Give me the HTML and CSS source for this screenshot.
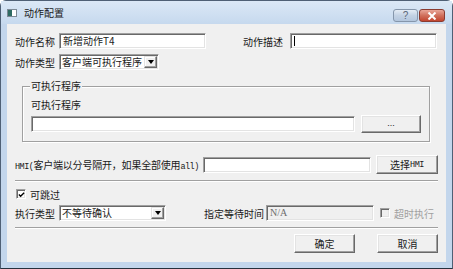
FILE: index.html
```html
<!DOCTYPE html>
<html lang="zh-CN">
<head>
    <meta charset="UTF-8">
    <meta name="viewport" content="width=device-width, initial-scale=1.0">
    <title>动作配置</title>
    <link rel="stylesheet" href="styles.css">
</head>
<body>

    <div class="window">
        <div class="titlebar">
            <span class="app-icon"><span class="app-icon-pane"></span></span>
            <span class="title">动作配置</span>
            <span class="caption-btns">
                <span class="cap-btn help">?</span>
                <span class="cap-btn close">
                    <svg width="10" height="8" viewBox="0 0 10 8"><path d="M1.5 0.5 L8.5 7.5 M8.5 0.5 L1.5 7.5" stroke="#fff" stroke-width="2"/></svg>
                </span>
            </span>
        </div>

        <div class="client">
            <div class="row row-name">
                <span class="lbl">动作名称</span>
                <div class="edit w-name">新增动作T4</div>
                <span class="fill"></span>
                <span class="lbl-desc">动作描述</span>
                <div class="edit w-name desc"><span class="caret"></span></div>
            </div>

            <div class="row row-type">
                <span class="lbl">动作类型</span>
                <div class="edit combo w-type">
                    <span class="combo-text">客户端可执行程序</span>
                    <span class="combo-arrow"><span class="tri"></span></span>
                </div>
            </div>

            <div class="group">
                <span class="legend">可执行程序</span>
                <div class="group-lbl">可执行程序</div>
                <div class="row row-exe">
                    <div class="edit w-exe"></div>
                    <div class="btn btn-browse">...</div>
                </div>
            </div>

            <div class="row row-hmi">
                <span class="lbl-hmi"><span class="latin">HMI(</span>客户端以分号隔开，如果全部使用<span class="latin">all)</span></span>
                <div class="edit w-hmi"></div>
                <div class="btn btn-hmi">选择<span class="latin">HMI</span></div>
            </div>

            <div class="sep sep-1"></div>

            <div class="row row-skip">
                <span class="check">
                    <svg width="8" height="8" viewBox="0 0 8 8"><path d="M1 3.5 L3 5.5 L7 1.5" stroke="#000" stroke-width="1.6" fill="none"/></svg>
                </span>
                <span>可跳过</span>
            </div>

            <div class="row row-exec">
                <span class="lbl">执行类型</span>
                <div class="edit combo w-exec">
                    <span class="combo-text">不等待确认</span>
                    <span class="combo-arrow"><span class="tri"></span></span>
                </div>
                <span class="lbl-wait">指定等待时间</span>
                <div class="edit disabled w-wait">N/A</div>
                <span class="check disabled"></span>
                <span class="text-disabled">超时执行</span>
            </div>

            <div class="sep sep-2"></div>

            <div class="row row-buttons">
                <div class="btn btn-dlg">确定</div>
                <div class="btn btn-dlg">取消</div>
            </div>
        </div>
    </div>

</body>
</html>
```

FILE: styles.css
```css
body {
    margin: 0;
    padding: 0;
    font-family: "Noto Sans CJK SC", "Liberation Sans", sans-serif;
    font-size: 10px;
    color: #1a1a1a;
    background: #fff;
}

.window {
    width: 453px;
    height: 269px;
    box-sizing: border-box;
    border: 1px solid #4f6075;
    border-bottom-color: #26313d;
    border-radius: 6px 6px 0 0;
    padding: 0 6px 6px;
    background: #c3d6ec;
}

/* title bar */
.titlebar {
    height: 23px;
    display: flex;
    align-items: center;
    background: linear-gradient(#dbe8f6, #c6d9ee);
    margin: 0 -6px;
    padding: 0 6px;
}

.app-icon {
    width: 10px;
    height: 8px;
    box-sizing: border-box;
    border: 1px solid #7d8a96;
    background: #fff;
    display: flex;
    margin-top: 1px;
}

.app-icon-pane {
    width: 4px;
    background: #2f6b63;
}

.title {
    margin-left: 7px;
    line-height: 12px;
}

.caption-btns {
    margin-left: auto;
    margin-right: 1px;
    align-self: flex-start;
    margin-top: 8px;
    display: flex;
    gap: 1px;
}

.cap-btn {
    height: 13px;
    box-sizing: border-box;
    border-radius: 3px;
    display: flex;
    align-items: center;
    justify-content: center;
}

.help {
    width: 25px;
    border: 1px solid #8596ab;
    background: linear-gradient(#e4ecf5, #c3d2e4 50%, #b3c6dd);
    color: #5a6778;
    font-size: 10px;
    font-family: "Liberation Sans", sans-serif;
}

.close {
    width: 26px;
    border: 1px solid #8a3b30;
    background: linear-gradient(#e9a698, #d0705c 50%, #c2452f);
}

/* client area */
.client {
    height: 238px;
    background: #f0f0f0;
    padding: 0 8px;
    display: flex;
    flex-direction: column;
}

.row {
    display: flex;
    align-items: center;
}

.row-name {
    margin-top: 9px;
    height: 16px;
    margin-right: 1px;
}

.row-type {
    margin-top: 5px;
    height: 16px;
}

.lbl {
    width: 44px;
    flex: none;
}

.lbl-desc {
    margin-right: 7px;
}

.fill {
    flex: 1;
}

.edit {
    height: 16px;
    box-sizing: border-box;
    background: #fff;
    border: 1px solid #fff;
    border-top-color: #a0a0a0;
    border-left-color: #a0a0a0;
    box-shadow: inset 1px 1px #696969, inset -1px -1px #e3e3e3;
    padding-left: 3px;
    line-height: 14px;
    white-space: nowrap;
    flex: none;
}

.edit.disabled {
    background: #f0f0f0;
    color: #6d6d6d;
    font-family: "Liberation Serif", serif;
}

.w-name { width: 147px; }
.w-type { width: 100px; }
.w-exe { width: 324px; }
.w-hmi { width: 168px; }
.w-exec { width: 107px; }
.w-wait { width: 108px; }

.desc {
    display: flex;
    align-items: center;
}

.caret {
    width: 1px;
    height: 10px;
    background: #000;
}

.combo {
    display: flex;
    padding-left: 2px;
}

.combo-text {
    flex: 1;
}

.combo-arrow {
    width: 13px;
    height: 12px;
    margin: 1px 1px 1px 0;
    box-sizing: border-box;
    background: #f0f0f0;
    border: 1px solid #696969;
    border-top-color: #e3e3e3;
    border-left-color: #e3e3e3;
    box-shadow: inset -1px -1px #a0a0a0, inset 1px 1px #fff;
    display: flex;
    align-items: center;
    justify-content: center;
}

.tri {
    width: 0;
    height: 0;
    border-left: 3.5px solid transparent;
    border-right: 3.5px solid transparent;
    border-top: 4px solid #000;
}

.btn {
    box-sizing: border-box;
    background: #f0f0f0;
    border: 1px solid #696969;
    border-top-color: #fff;
    border-left-color: #fff;
    box-shadow: inset -1px -1px #a0a0a0, inset 1px 1px #e3e3e3;
    display: flex;
    align-items: center;
    justify-content: center;
    flex: none;
}

/* group box */
.group {
    position: relative;
    margin-top: 16px;
    margin-left: 7px;
    width: 408px;
    height: 56px;
    box-sizing: border-box;
    border: 1px solid #a0a0a0;
    box-shadow: inset 1px 1px #fff, 1px 1px #fff;
    padding: 12px 0 0 8px;
}

.legend {
    position: absolute;
    top: -7px;
    left: 7px;
    padding: 0 1px;
    background: #f0f0f0;
    line-height: 12px;
}

.group-lbl {
    height: 12px;
    line-height: 12px;
}

.row-exe {
    margin-top: 4px;
    height: 18px;
    gap: 6px;
}

.btn-browse {
    width: 60px;
    height: 18px;
    font-family: "Liberation Sans", sans-serif;
    font-size: 9px;
    padding-bottom: 3px;
}

/* HMI row */
.row-hmi {
    margin-top: 13px;
    height: 19px;
}

.lbl-hmi {
    width: 188px;
    flex: none;
    white-space: nowrap;
    letter-spacing: -0.2px;
}

.latin {
    font-family: "Liberation Mono", monospace;
    font-size: 8.5px;
    letter-spacing: -0.5px;
}

.btn-hmi {
    width: 62px;
    height: 19px;
    margin-left: 5px;
}

.sep {
    height: 0;
    border-top: 1px solid #a0a0a0;
    border-bottom: 1px solid #fff;
}

.sep-1 {
    margin-top: 6px;
}

.row-skip {
    margin-top: 6px;
    height: 12px;
    gap: 4px;
}

.check {
    width: 10px;
    height: 10px;
    box-sizing: border-box;
    background: #fff;
    border: 1px solid #fff;
    border-top-color: #a0a0a0;
    border-left-color: #a0a0a0;
    box-shadow: inset 1px 1px #696969, inset -1px -1px #e3e3e3;
    margin-left: 1px;
    display: flex;
    align-items: center;
    justify-content: center;
    flex: none;
}

.check svg {
    margin-left: 1px;
    margin-top: 1px;
}

.check.disabled {
    background: #f0f0f0;
    margin-left: 6px;
}

.row-exec {
    margin-top: 5px;
    height: 16px;
}

.lbl-wait {
    margin-left: 38px;
    width: 62px;
    flex: none;
}

.text-disabled {
    margin-left: 4px;
    color: #a0a0a0;
}

.sep-2 {
    margin-top: 6px;
}

.row-buttons {
    margin-top: 5px;
    justify-content: flex-end;
    gap: 22px;
}

.btn-dlg {
    width: 61px;
    height: 19px;
}
```
